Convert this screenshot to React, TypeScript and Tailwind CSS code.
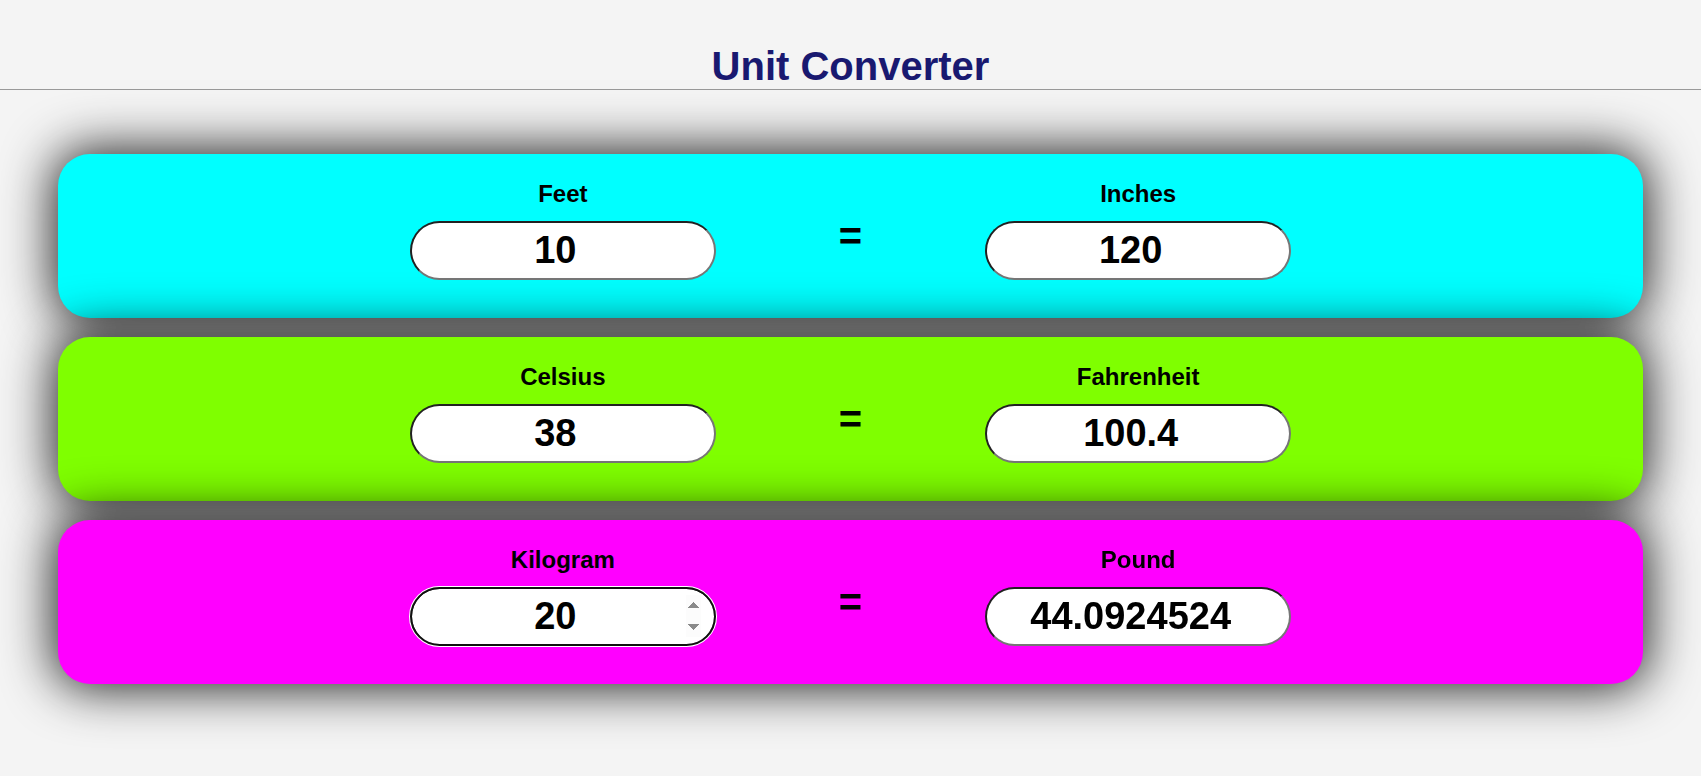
import { useState } from "react";

type Pair = {
  from: string;
  to: string;
  bg: string;
  convert: (v: number) => number;
  back: (v: number) => number;
  initial: string;
  focus?: boolean;
};

const round = (n: number) => String(Number(n.toFixed(7)));

const pairs: Pair[] = [
  { from: "Feet", to: "Inches", bg: "bg-[#00ffff]", convert: (v) => v * 12, back: (v) => v / 12, initial: "10" },
  {
    from: "Celsius",
    to: "Fahrenheit",
    bg: "bg-[#7fff00]",
    convert: (v) => (v * 9) / 5 + 32,
    back: (v) => ((v - 32) * 5) / 9,
    initial: "38",
  },
  {
    from: "Kilogram",
    to: "Pound",
    bg: "bg-[#ff00ff]",
    convert: (v) => v * 2.20462262,
    back: (v) => v / 2.20462262,
    initial: "20",
    focus: true,
  },
];

const inputCls =
  "w-[306px] h-[59px] px-[13px] py-[6px] rounded-full bg-white border-2 border-[#767676] [border-style:inset] text-center text-[38px] font-bold text-black caret-transparent";

function Row({ p }: { p: Pair }) {
  const [left, setLeft] = useState(p.initial);
  const [right, setRight] = useState(round(p.convert(parseFloat(p.initial))));

  return (
    <div className={`${p.bg} h-[164px] rounded-[32px] shadow-[0_0_50px_5px_rgba(0,0,0,0.85)] flex items-center justify-center gap-[123px]`}>
      <div className="flex flex-col items-center pb-[16px]">
        <label className="text-[24px] font-bold text-black mb-[9px]">{p.from}</label>
        <input
          type="number"
          className={inputCls}
          value={left}
          autoFocus={p.focus}
          onChange={(e) => {
            setLeft(e.target.value);
            const n = parseFloat(e.target.value);
            setRight(isNaN(n) ? "" : round(p.convert(n)));
          }}
        />
      </div>
      <span className="text-[40px] font-bold text-black">=</span>
      <div className="flex flex-col items-center pb-[16px]">
        <label className="text-[24px] font-bold text-black mb-[9px]">{p.to}</label>
        <input
          type="number"
          className={inputCls}
          value={right}
          onChange={(e) => {
            setRight(e.target.value);
            const n = parseFloat(e.target.value);
            setLeft(isNaN(n) ? "" : round(p.back(n)));
          }}
        />
      </div>
    </div>
  );
}

export default function App() {
  return (
    <div className="min-h-screen bg-[#f4f4f4] font-['Liberation_Sans',Arial,sans-serif]">
      <div className="pt-[44px] border-b border-[#999999] text-center">
        <h1 className="text-[40px] leading-[45px] font-bold text-[#191970]">Unit Converter</h1>
      </div>
      <div className="px-[58px] pt-[64px] flex flex-col gap-[19px]">
        {pairs.map((p) => (
          <Row key={p.from} p={p} />
        ))}
      </div>
    </div>
  );
}
